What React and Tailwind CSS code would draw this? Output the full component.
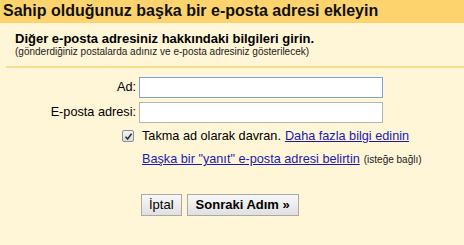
export default function App() {
  return (
    <div
      className="w-[464px] h-[245px] bg-[#fff5d7] text-black overflow-hidden"
      style={{ fontFamily: '"Liberation Sans", Arial, sans-serif' }}
    >
      {/* title bar */}
      <div className="h-[23px] bg-[#fcd36c] pl-[3px] pt-[1px]">
        <h1 className="text-[16px] font-bold leading-[20px] text-[#111]">
          Sahip olduğunuz başka bir e-posta adresi ekleyin
        </h1>
      </div>

      <div className="pl-[15px] pt-[8px] pb-[8px]">
        <p className="text-[13px] font-bold leading-[15px]">
          Diğer e-posta adresiniz hakkındaki bilgileri girin.
        </p>
        <p className="text-[10px] leading-[12px] text-[#222]">
          (gönderdiğiniz postalarda adınız ve e-posta adresiniz gösterilecek)
        </p>
      </div>
      <div className="ml-[6px] h-[2px] bg-[#f9dc8a]" />

      <div className="mt-[9px] flex flex-col gap-[4px] text-[12.7px]">
        <div className="flex items-center">
          <label className="w-[139px] text-right pr-[3px]">Ad:</label>
          <input
            type="text"
            className="w-[244px] h-[21px] bg-white border border-[#7ea3d9] outline-none"
          />
        </div>
        <div className="flex items-center">
          <label className="w-[139px] text-right pr-[3px]">E-posta adresi:</label>
          <input
            type="text"
            className="w-[244px] h-[21px] bg-white border border-[#b5b5b5] outline-none"
          />
        </div>
      </div>

      <div className="mt-[3px] flex items-center text-[12.7px] leading-[20px]">
        <div className="w-[142px] flex justify-end pr-[8px]">
          <span className="w-[12px] h-[12px] border border-[#8f8f8f] rounded-[2px] bg-gradient-to-b from-[#f4f4f4] to-[#dcdcdc] flex items-center justify-center">
            <svg width="9" height="9" viewBox="0 0 9 9">
              <path d="M1.5 4.8 L3.6 7 L7.6 1.8" fill="none" stroke="#333" strokeWidth="1.6" />
            </svg>
          </span>
        </div>
        <span>Takma ad olarak davran.</span>
        <a className="ml-[4px] text-[#1a1ab8] underline">Daha fazla bilgi edinin</a>
      </div>

      <div className="mt-[3px] pl-[142px] flex items-baseline leading-[20px]">
        <a className="text-[12.7px] text-[#1a1ab8] underline">
          Başka bir "yanıt" e-posta adresi belirtin
        </a>
        <span className="ml-[4px] text-[10px] text-[#222]">(isteğe bağlı)</span>
      </div>

      <div className="mt-[24px] pl-[141px] flex gap-[5px]">
        <button className="h-[22px] px-[7px] text-[13px] border border-[#a9a9a9] bg-gradient-to-b from-[#f8f8f8] to-[#e0e0e0]">
          İptal
        </button>
        <button className="h-[22px] px-[8px] text-[13px] font-bold border border-[#a9a9a9] bg-gradient-to-b from-[#f8f8f8] to-[#e0e0e0]">
          Sonraki Adım »
        </button>
      </div>
    </div>
  );
}
